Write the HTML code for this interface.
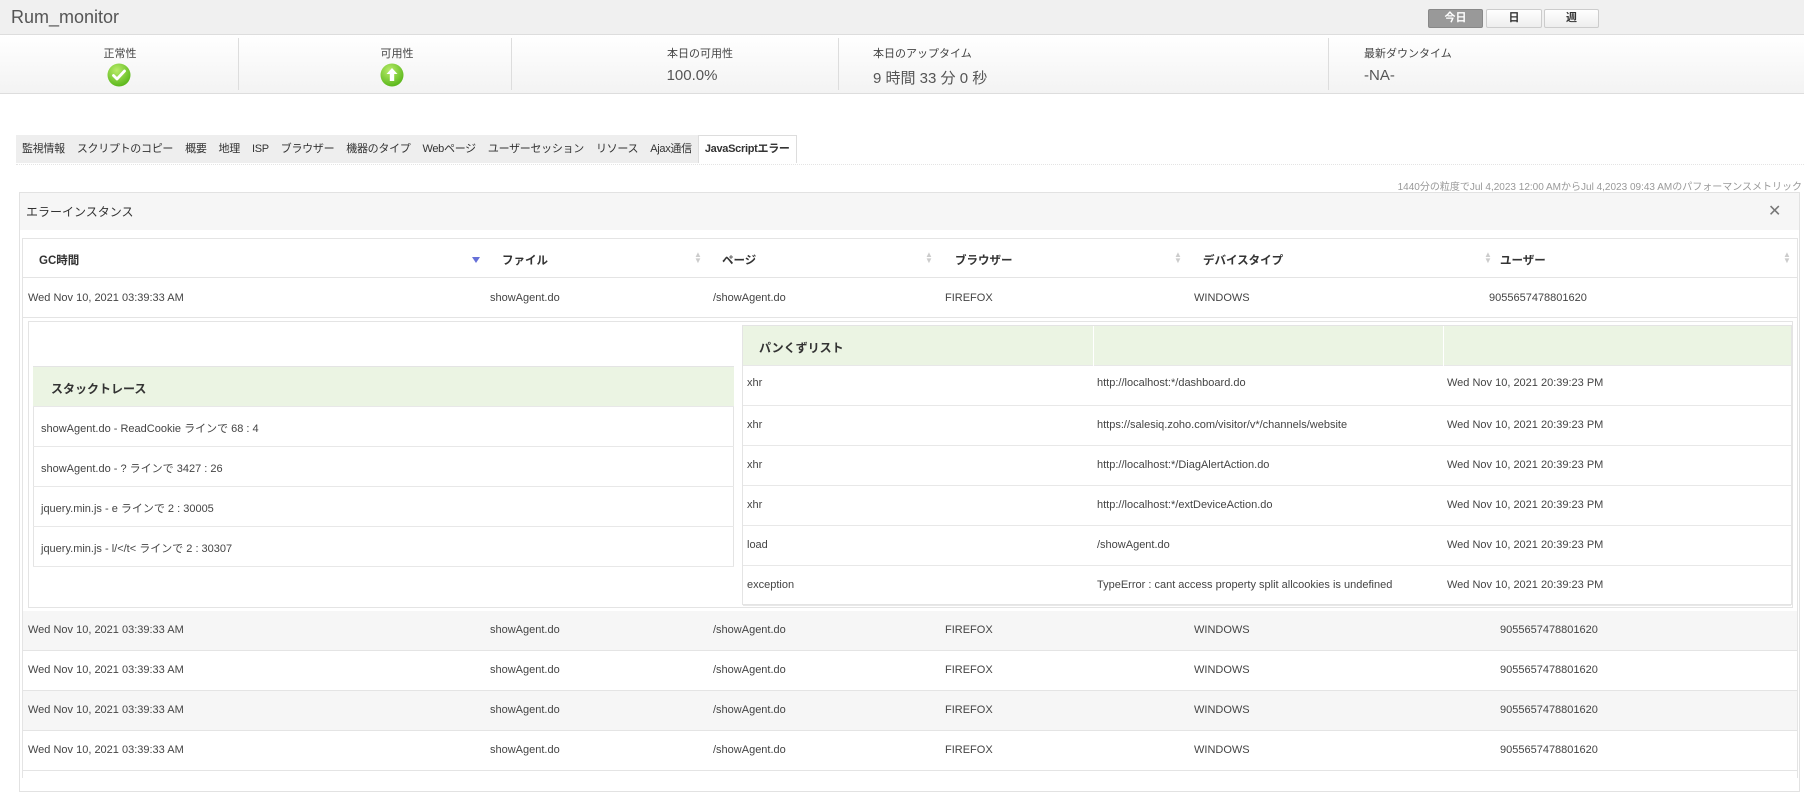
<!DOCTYPE html>
<html><head><meta charset="utf-8">
<style>
*{box-sizing:border-box;margin:0;padding:0}
body{width:1804px;height:773px;overflow:hidden;background:#fff;font-family:"Liberation Sans","Noto Sans CJK JP",sans-serif;color:#444;position:relative}
.a{position:absolute;white-space:nowrap}
.t11{font-size:11px}
#title{left:0;top:0;width:1804px;height:35px;background:#f0f0f0;border-bottom:1px solid #ddd}
#stats{left:0;top:35px;width:1804px;height:59px;background:linear-gradient(#fff,#f3f3f3);border-bottom:1px solid #ddd}
.sep{position:absolute;top:38px;width:1px;height:52px;background:#ddd}
.btn{position:absolute;top:9px;height:19px;border:1px solid #ccc;border-radius:2px;background:linear-gradient(#fff,#eee);font-size:11px;text-align:center;line-height:17px;color:#333;font-weight:bold}
.tabs{left:16px;top:135px;height:28px;background:#eee;display:flex;font-size:11px;color:#333}
.tabs span{padding:0 6px;line-height:28px;letter-spacing:-0.3px}
.tabs span.act{background:#fff;border:1px solid #ddd;border-bottom:none;font-weight:bold;padding:0 6px;line-height:27px}
.row{position:absolute;left:23px;width:1774px;height:40px;border-bottom:1px solid #e4e4e4;font-size:11px;color:#444}
.row span{position:absolute;top:13px}
.g{background:#f6f6f6}
.hd span{font-weight:bold;font-size:11.5px;color:#333}
.st{position:absolute;left:33px;width:701px;height:40px;border-bottom:1px solid #e8e8e8;font-size:11px}
.st span{position:absolute;left:8px;top:13px}
.bc{position:absolute;left:743px;width:1048px;height:40px;border-bottom:1px solid #e8e8e8;font-size:11px}
.bc span{position:absolute;top:13px}
</style></head><body>
<div id="title" class="a"></div>
<div class="a" style="left:11px;top:7px;font-size:18px;color:#555">Rum_monitor</div>
<div class="btn" style="left:1428px;width:55px;background:#999;border-color:#888;color:#fff">今日</div>
<div class="btn" style="left:1486px;width:56px">日</div>
<div class="btn" style="left:1544px;width:55px">週</div>

<div id="stats" class="a"></div>
<div class="sep" style="left:238px"></div>
<div class="sep" style="left:511px"></div>
<div class="sep" style="left:838px"></div>
<div class="sep" style="left:1328px"></div>
<div class="a t11" style="left:100px;top:45px;width:40px;text-align:center">正常性</div>
<div class="a t11" style="left:372px;top:45px;width:50px;text-align:center">可用性</div>
<div class="a t11" style="left:650px;top:45px;width:100px;text-align:center">本日の可用性</div>
<div class="a" style="left:650px;top:67px;width:84px;text-align:center;font-size:15px;color:#555">100.0%</div>
<div class="a t11" style="left:873px;top:45px">本日のアップタイム</div>
<div class="a" style="left:873px;top:67px;font-size:15px;color:#555">9 時間 33 分 0 秒</div>
<div class="a t11" style="left:1364px;top:45px">最新ダウンタイム</div>
<div class="a" style="left:1364px;top:67px;font-size:15px;color:#555">-NA-</div>
<svg class="a" style="left:107px;top:63px" width="24" height="24" viewBox="0 0 24 24"><defs><radialGradient id="gr" cx="40%" cy="30%" r="70%"><stop offset="0" stop-color="#b9ec6a"/><stop offset="1" stop-color="#5cb81c"/></radialGradient></defs><circle cx="12" cy="12" r="11.5" fill="url(#gr)"/><path d="M6.5 12.5l3.5 3.5 7.5-8" stroke="#fff" stroke-width="2.8" fill="none" stroke-linecap="round" stroke-linejoin="round"/></svg>
<svg class="a" style="left:380px;top:63px" width="24" height="24" viewBox="0 0 24 24"><circle cx="12" cy="12" r="11.5" fill="url(#gr)"/><path d="M12 5l5.5 6h-3.3v7h-4.4v-7H6.5z" fill="#fff"/></svg>

<div class="a tabs">
<span>監視情報</span><span>スクリプトのコピー</span><span>概要</span><span>地理</span><span>ISP</span><span>ブラウザー</span><span>機器のタイプ</span><span>Webページ</span><span>ユーザーセッション</span><span>リソース</span><span>Ajax通信</span><span class="act">JavaScriptエラー</span>
</div>
<div class="a" style="left:16px;top:164px;width:1788px;border-top:1px dotted #e4e4e4"></div>
<div class="a" style="right:2px;top:178px;font-size:10px;color:#999">1440分の粒度でJul 4,2023 12:00 AMからJul 4,2023 09:43 AMのパフォーマンスメトリック</div>

<div class="a" style="left:19px;top:192px;width:1781px;height:600px;border:1px solid #e2e2e2"></div>
<div class="a" style="left:20px;top:193px;width:1779px;height:37px;background:#f6f6f6"></div>
<div class="a" style="left:26px;top:203px;font-size:12px;color:#333">エラーインスタンス</div>
<div class="a" style="left:1768px;top:201px;font-size:16px;color:#777">✕</div>

<div class="a" style="left:22px;top:238px;width:1776px;height:540px;border:1px solid #e4e4e4;border-bottom:none"></div>
<div class="row hd" style="top:239px;height:39px">
<span style="left:16px">GC時間</span><span style="left:479px">ファイル</span><span style="left:699px">ページ</span><span style="left:932px">ブラウザー</span><span style="left:1180px">デバイスタイプ</span><span style="left:1477px">ユーザー</span>
<div class="a" style="left:449px;top:18px;width:0;height:0;border-left:4px solid transparent;border-right:4px solid transparent;border-top:6px solid #6670d8"></div>
<div class="a" style="left:671px;top:13px;color:#ccc;font-size:8px;line-height:6px">▲<br>▼</div>
<div class="a" style="left:902px;top:13px;color:#ccc;font-size:8px;line-height:6px">▲<br>▼</div>
<div class="a" style="left:1151px;top:13px;color:#ccc;font-size:8px;line-height:6px">▲<br>▼</div>
<div class="a" style="left:1461px;top:13px;color:#ccc;font-size:8px;line-height:6px">▲<br>▼</div>
<div class="a" style="left:1760px;top:13px;color:#ccc;font-size:8px;line-height:6px">▲<br>▼</div>
</div>
<div class="row" style="top:279px;height:39px"><span style="left:5px">Wed Nov 10, 2021 03:39:33 AM</span><span style="left:467px">showAgent.do</span><span style="left:690px">/showAgent.do</span><span style="left:922px">FIREFOX</span><span style="left:1171px">WINDOWS</span><span style="left:1466px">9055657478801620</span></div>

<div class="a" style="left:28px;top:321px;width:1765px;height:287px;border:1px solid #e4e4e4"></div>
<div class="a" style="left:33px;top:366px;width:701px;height:201px;border:1px solid #e4e4e4"></div>
<div class="st" style="top:367px;background:#ebf4e3"><span style="left:18px;font-weight:bold;font-size:12px;color:#333">スタックトレース</span></div>
<div class="st" style="top:407px"><span>showAgent.do - ReadCookie ラインで 68 : 4</span></div>
<div class="st" style="top:447px"><span>showAgent.do - ? ラインで 3427 : 26</span></div>
<div class="st" style="top:487px"><span>jquery.min.js - e ラインで 2 : 30005</span></div>
<div class="st" style="top:527px"><span>jquery.min.js - l/&lt;/t&lt; ラインで 2 : 30307</span></div>

<div class="a" style="left:742px;top:325px;width:1050px;height:280px;border:1px solid #e4e4e4"></div>
<div class="bc" style="top:326px;background:#ebf4e3"><span style="left:16px;font-weight:bold;font-size:12px;color:#333">パンくずリスト</span><div class="a" style="left:350px;top:0;width:1px;height:40px;background:#fff"></div><div class="a" style="left:700px;top:0;width:1px;height:40px;background:#fff"></div></div>
<div class="bc" style="top:366px"><span style="left:4px;top:11px">xhr</span><span style="left:354px;top:11px">http://localhost:*/dashboard.do</span><span style="left:704px;top:11px">Wed Nov 10, 2021 20:39:23 PM</span></div>
<div class="bc" style="top:406px"><span style="left:4px">xhr</span><span style="left:354px">https://salesiq.zoho.com/visitor/v*/channels/website</span><span style="left:704px">Wed Nov 10, 2021 20:39:23 PM</span></div>
<div class="bc" style="top:446px"><span style="left:4px">xhr</span><span style="left:354px">http://localhost:*/DiagAlertAction.do</span><span style="left:704px">Wed Nov 10, 2021 20:39:23 PM</span></div>
<div class="bc" style="top:486px"><span style="left:4px">xhr</span><span style="left:354px">http://localhost:*/extDeviceAction.do</span><span style="left:704px">Wed Nov 10, 2021 20:39:23 PM</span></div>
<div class="bc" style="top:526px"><span style="left:4px">load</span><span style="left:354px">/showAgent.do</span><span style="left:704px">Wed Nov 10, 2021 20:39:23 PM</span></div>
<div class="bc" style="top:566px"><span style="left:4px">exception</span><span style="left:354px">TypeError : cant access property split allcookies is undefined</span><span style="left:704px">Wed Nov 10, 2021 20:39:23 PM</span></div>

<div class="row g" style="top:611px"><span style="left:5px">Wed Nov 10, 2021 03:39:33 AM</span><span style="left:467px">showAgent.do</span><span style="left:690px">/showAgent.do</span><span style="left:922px">FIREFOX</span><span style="left:1171px">WINDOWS</span><span style="left:1477px">9055657478801620</span></div>
<div class="row" style="top:651px"><span style="left:5px">Wed Nov 10, 2021 03:39:33 AM</span><span style="left:467px">showAgent.do</span><span style="left:690px">/showAgent.do</span><span style="left:922px">FIREFOX</span><span style="left:1171px">WINDOWS</span><span style="left:1477px">9055657478801620</span></div>
<div class="row g" style="top:691px"><span style="left:5px">Wed Nov 10, 2021 03:39:33 AM</span><span style="left:467px">showAgent.do</span><span style="left:690px">/showAgent.do</span><span style="left:922px">FIREFOX</span><span style="left:1171px">WINDOWS</span><span style="left:1477px">9055657478801620</span></div>
<div class="row" style="top:731px"><span style="left:5px">Wed Nov 10, 2021 03:39:33 AM</span><span style="left:467px">showAgent.do</span><span style="left:690px">/showAgent.do</span><span style="left:922px">FIREFOX</span><span style="left:1171px">WINDOWS</span><span style="left:1477px">9055657478801620</span></div>
</body></html>
